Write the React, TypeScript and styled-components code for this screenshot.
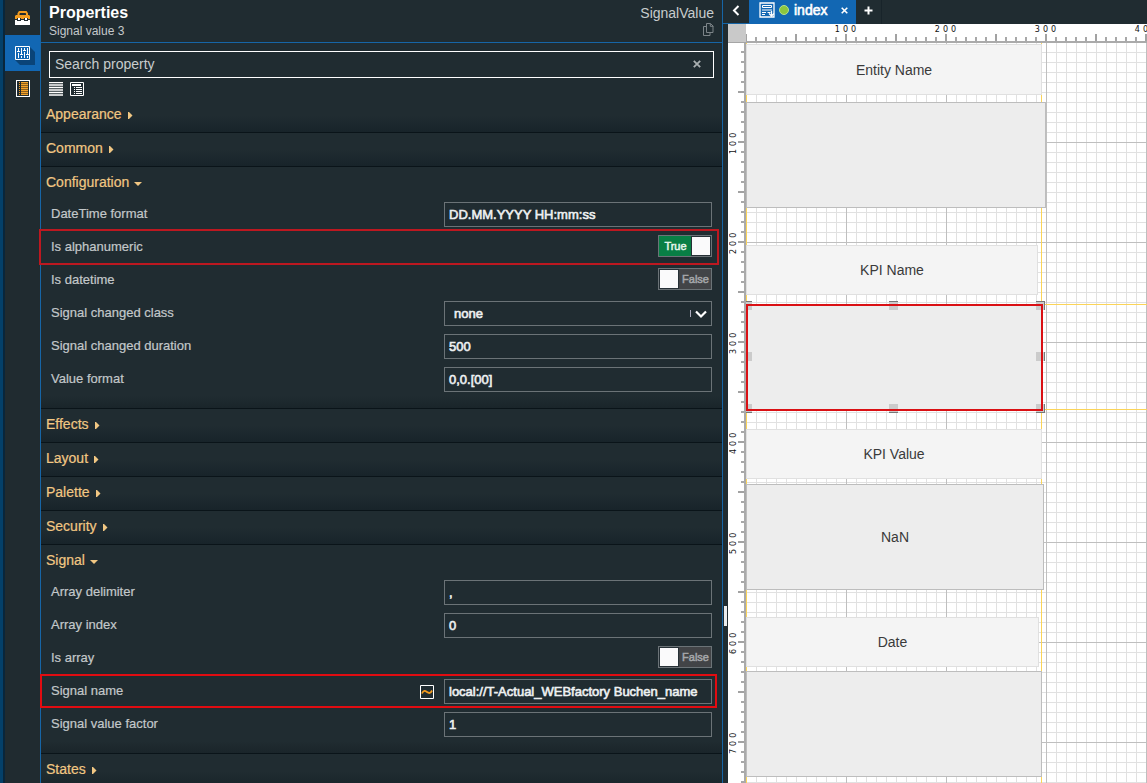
import React from 'react';
import styled, { createGlobalStyle, css } from 'styled-components';

const GlobalStyle = createGlobalStyle`
  *, *::before, *::after { box-sizing: border-box; }
  body { margin: 0; overflow: hidden; background: #202c31; }
`;

const Page = styled.div`
  display: flex;
  width: 1147px;
  height: 783px;
  overflow: hidden;
  background: #202c31;
  font-family: 'Liberation Sans', Arial, sans-serif;
  color: #c8cccd;
`;

const Rail = styled.nav`
  flex: 0 0 41px;
  border-left: 3px solid #044069;
  border-right: 1px solid #1665a6;
  padding-left: 2px;
  background: linear-gradient(to right, #09263b 2px, #202b30 2px);
`;

const RailItem = styled.div<{ $active?: boolean }>`
  height: 36px;
  display: flex;
  align-items: center;
  justify-content: center;
  background: ${p => (p.$active ? '#1267b3' : 'transparent')};
  &:first-child { height: 35px; }
`;

const Panel = styled.section`
  flex: 0 0 682px;
  border-right: 1px solid #1665a6;
  display: flex;
  flex-direction: column;
`;

const PanelHeader = styled.header`
  flex: none;
  height: 43px;
  border-bottom: 1px solid #1665a6;
  padding: 3px 8px 0;
  display: flex;
  justify-content: space-between;
`;

const Title = styled.h1`
  margin: 0;
  font-size: 16px;
  line-height: 19px;
  color: #fff;
`;

const Subtitle = styled.div`
  font-size: 12px;
  line-height: 18px;
  color: #c5c9cb;
`;

const TypeInfo = styled.div`
  font-size: 14px;
  line-height: 20px;
  display: flex;
  flex-direction: column;
  align-items: flex-end;
`;

const Search = styled.div`
  flex: none;
  margin: 8px 8px 0;
  height: 27px;
  border: 1px solid #fff;
  display: flex;
  align-items: center;
  justify-content: space-between;
  padding: 0 12px 2px 5px;
  font-size: 14px;
`;

const ViewModes = styled.div`
  flex: none;
  display: flex;
  gap: 7px;
  height: 21px;
  padding: 4px 8px 0;
`;

const Group = styled.section<{ $open?: boolean }>`
  flex: none;
  border-bottom: 1px solid #0a1419;
  background: ${p =>
    p.$open
      ? 'linear-gradient(to top, #1a252a, #202c31 12px)'
      : 'linear-gradient(to top, #18242a, #202c31 16px)'};
  box-shadow: 0 1px 0 #253237;
  padding-bottom: ${p => (p.$open ? '8px' : '0')};
`;

const GroupTitle = styled.h2<{ $open?: boolean }>`
  margin: 0;
  height: ${p => (p.$open ? '35px' : '33px')};
  padding: 0 5px ${p => (p.$open ? '6px' : '4px')};
  display: flex;
  align-items: center;
  gap: 5px;
  font-size: 14px;
  font-weight: normal;
  color: #f1c783;
  -webkit-text-stroke: 0.2px currentColor;

  svg { margin-top: 3px; }
`;

const Row = styled.div`
  height: 33px;
  padding: 0 10px;
  display: flex;
  align-items: flex-start;
`;

const RowLabel = styled.span`
  flex: 1;
  font-size: 13px;
  line-height: 23px;
  color: #c3c8ca;
  -webkit-text-stroke: 0.2px currentColor;
`;

const Field = styled.div<{ $select?: boolean }>`
  width: 268px;
  height: 25px;
  border: 1px solid #6b7377;
  padding: 0 ${p => (p.$select ? '4px 0 9px' : '5px 0 4px')};
  display: flex;
  align-items: center;
  justify-content: space-between;
  font-size: 13px;
  white-space: nowrap;
  color: #eef1f2;
  -webkit-text-stroke: 0.6px currentColor;
`;

const Toggle = styled.div<{ $on?: boolean }>`
  width: 54px;
  height: 22px;
  border: 1px solid #6b7377;
  display: flex;
  flex-direction: ${p => (p.$on ? 'row-reverse' : 'row')};
  align-items: center;
  background: ${p => (p.$on ? '#087f45' : '#424447')};
  color: ${p => (p.$on ? '#e3f5ea' : '#a5a7aa')};
  font-size: 11px;
  -webkit-text-stroke: 0.5px currentColor;
`;

const Knob = styled.i`
  width: 20px;
  height: 20px;
  flex: none;
  background: #fafafb;
  border: 1px solid #263036;
`;

const ToggleText = styled.span`
  flex: 1;
  text-align: center;
  padding-left: 1px;
`;

const SignalIcon = styled.div`
  margin: 6px 10px 0 0;
  display: flex;
`;

const Anchor = styled.div`
  position: relative;
`;

const Marker = styled.div<{ $soft?: boolean }>`
  position: absolute;
  pointer-events: none;
  border: 2px solid ${p => (p.$soft ? '#bd1820' : '#e10c11')};
  left: ${p => (p.$soft ? '-2px' : '-1px')};
  right: ${p => (p.$soft ? '3px' : '5px')};
  top: ${p => (p.$soft ? '-6px' : '-5px')};
  height: ${p => (p.$soft ? '36px' : '34px')};
`;

const Editor = styled.main`
  flex: 1;
  min-width: 0;
  display: flex;
  flex-direction: column;
`;

const Tabs = styled.div`
  height: 24px;
  flex: none;
  display: flex;
  color: #fff;
`;

const Back = styled.div`
  width: 26px;
  display: flex;
  align-items: center;
  justify-content: center;
  padding-bottom: 3px;
  border-bottom: 1px solid #1665a6;
`;

const Tab = styled.div`
  width: 107px;
  display: flex;
  align-items: center;
  padding: 0 8px 4px 10px;
  background: #1267b3;
  font-size: 14px;
  -webkit-text-stroke: 0.6px currentColor;
`;

const Dot = styled.i`
  width: 10px;
  height: 10px;
  margin: 0 5px 0 4px;
  border-radius: 50%;
  background: #8cc63f;
  border: 1px solid #b6df8d;
`;

const TabName = styled.span`
  flex: 1;
`;

const NewTab = styled.div`
  width: 26px;
  display: flex;
  align-items: center;
  justify-content: center;
  padding-bottom: 4px;
  border-right: 1px solid #18242a;
`;

const Workspace = styled.div`
  flex: 1;
  display: grid;
  grid-template: 19px 1fr / 5px 18px 1fr;
  background: #fff;
  overflow: hidden;
`;

const Splitter = styled.div`
  grid-row: 1 / 3;
  background: #202c31;
  display: flex;
  padding: 582px 0 0 1px;
`;

const Grip = styled.i`
  width: 3px;
  height: 20px;
  background: #e9ebec;
`;

const Corner = styled.div`
  background: #c9c9c9;
  border-bottom: 1px solid #a5a5a5;
`;

const rulerText = css`
  font-family: 'DejaVu Sans', Verdana, sans-serif;
  font-size: 8px;
  letter-spacing: 3px;
  white-space: nowrap;
  color: #111;
`;

const TopRuler = styled.div`
  ${rulerText}
  display: flex;
  padding-left: 50px;
  overflow: hidden;
  background:
    linear-gradient(#aaa, #aaa) 0 17px / 100% 2px no-repeat,
    linear-gradient(to right, #a2a2a2 1px, transparent 1px 49px, #a2a2a2 49px) 0 10px / 50px 9px repeat-x,
    linear-gradient(to right, #a8a8a8 1px, transparent 1px 9px, #a8a8a8 9px) 0 13px / 10px 5px repeat-x;
`;

const TopMark = styled.span`
  flex: 0 0 100px;
  text-align: center;
  padding-left: 2px;
  line-height: 11px;
`;

const SideRuler = styled.div`
  ${rulerText}
  display: flex;
  flex-direction: column;
  padding-top: 50px;
  overflow: hidden;
  background:
    linear-gradient(#aaa, #aaa) 16px 0 / 2px 100% no-repeat,
    linear-gradient(#a2a2a2 1px, transparent 1px 49px, #a2a2a2 49px) 10px -1px / 8px 50px repeat-y,
    linear-gradient(#a8a8a8 1px, transparent 1px 9px, #a8a8a8 9px) 13px -1px / 5px 10px repeat-y;
`;

const SideMark = styled.span`
  flex: 0 0 100px;
  width: 11px;
  writing-mode: vertical-rl;
  transform: rotate(180deg);
  text-align: center;
  line-height: 11px;
  padding-top: 2px;
`;

const Canvas = styled.div`
  position: relative;
  overflow: hidden;
  background:
    linear-gradient(#fbd458, #fbd458) 0 0 / 1px 100% no-repeat,
    linear-gradient(#fbd458, #fbd458) 295px 0 / 1px 100% no-repeat,
    linear-gradient(#fbd458, #fbd458) 0 261px / 100% 1px no-repeat,
    linear-gradient(#fbd458, #fbd458) 0 366px / 100% 1px no-repeat,
    linear-gradient(to right, #bfbfbf 1px, transparent 1px) 0 0 / 100px 100px,
    linear-gradient(#bfbfbf 1px, transparent 1px) 0 -1px / 100px 100px,
    linear-gradient(to right, #e1e1e1 1px, transparent 1px) 0 0 / 10px 10px,
    linear-gradient(#e1e1e1 1px, transparent 1px) 0 -1px / 10px 10px,
    #fff;
`;

const Widget = styled.div<{ $y: number; $w: number; $h: number; $kind: 'label' | 'value' }>`
  position: absolute;
  left: 0;
  top: ${p => p.$y}px;
  width: ${p => p.$w}px;
  height: ${p => p.$h}px;
  display: flex;
  align-items: center;
  justify-content: center;
  font-size: 14px;
  color: #3a3a3a;
  background: ${p => (p.$kind === 'label' ? '#f4f4f4' : '#ededed')};
  border: 1px solid ${p => (p.$kind === 'label' ? '#e0e0e0' : '#bdbdbd')};
`;

const Outline = styled.div`
  position: absolute;
  left: 0;
  top: 261px;
  width: 297px;
  height: 107px;
  border: 2px solid #da1014;
`;

const Handle = styled.i<{ $x: number; $y: number }>`
  position: absolute;
  left: ${p => p.$x}px;
  top: ${p => p.$y}px;
  width: 9px;
  height: 9px;
  background: #cbcbcb;
  border: 0 solid #777;
  border-top-width: ${p => (p.$y === 258 ? 1 : 0)}px;
  border-bottom-width: ${p => (p.$y === 361 ? 1 : 0)}px;
  border-right-width: ${p => (p.$x === 290 ? 1 : 0)}px;
`;

const Caret = ({ open }: { open?: boolean }) => (
  <svg width="9" height="9" viewBox="0 0 9 9" fill="#f1c783">
    {open ? <path d="M0 3h8L4 7z" /> : <path d="M1 1h1l3.500 3.500L2 8H1z" />}
  </svg>
);

const ToolboxIcon = () => (
  <svg width="15" height="14" viewBox="0 0 15 14">
    <path d="M3.500 5V2.500L4.500 1h6.500l1 1.500V5" fill="none" stroke="#f39c1f" strokeWidth="2" />
    <path d="M1 4h13l1 1v3H0V5z" fill="#f39c1f" />
    <path d="M0 9h15v5H0z" fill="#fff" />
    <path d="M2 7h4v3H2zM9 7h4v3H9z" fill="#202b30" />
    <path d="M3 7h2v2H3zM10 7h2v2h-2z" fill="#fff" />
  </svg>
);

const SlidersIcon = () => (
  <svg width="25" height="24" viewBox="0 0 25 24">
    <path d="M20 6l5 5v13H10l-5-5z" fill="#0a4478" />
    <path d="M5.500 5.500h14v13h-14z" fill="#1267b3" stroke="#fff" />
    <path
      d="M8.500 7v3m0 2v5M11.500 7v6m0 2v2M14.500 7v2m0 2v6M17.500 7v6m0 2v2M7 10.500h3M10 13.500h3M13 9.500h3M16 13.500h3"
      stroke="#fff"
      fill="none"
    />
  </svg>
);

const NotebookIcon = () => (
  <svg width="15" height="18" viewBox="0 0 15 18" shapeRendering="crispEdges">
    <path d="M1 1h13v16H1z" fill="#202b30" />
    <path d="M1.500 .5h13v16h-13z" fill="none" stroke="#fff" />
    <path d="M6 2h7v13H6z" fill="#8a5f20" />
    <path d="M4 2v13" stroke="#f39c1f" strokeDasharray="1 1" />
    <path d="M6 2.500h7M6 4.500h7M6 6.500h7M6 8.500h7M6 10.500h7M6 12.500h7M6 14.500h7" stroke="#f5a32a" />
  </svg>
);

const ListIcon = () => (
  <svg width="14" height="14" viewBox="0 0 14 14">
    <path d="M0 .5h14M0 3h14M0 5.500h14M0 8h14M0 10.500h14M0 13h14" stroke="#fff" strokeWidth="1.300" />
  </svg>
);

const TreeIcon = () => (
  <svg width="14" height="14" viewBox="0 0 14 14">
    <path d="M.5 .5h13v13H.5z" fill="none" stroke="#fff" />
    <path d="M2 2h9v2H2zM6 5h6v1H6zM6 7h6v1H6zM6 9h6v1H6zM6 11h6v1H6z" fill="#fff" />
    <path d="M4 5h1v1H4zM4 7h1v1H4zM4 9h1v1H4zM4 11h1v1H4z" fill="#fff" />
  </svg>
);

const CopyIcon = () => (
  <svg width="12" height="13" viewBox="0 0 12 13" fill="none" stroke="#7c8488">
    <path d="M4.500 .5h4l2.500 2.500v6.500H4.500z" />
    <path d="M8.300 .8v2.500h3M4 3.500H1.500v9h6.500v-2.500" />
  </svg>
);

const CrossIcon = ({ size, color }: { size: number; color: string }) => (
  <svg width={size} height={size} viewBox="0 0 8 8" stroke={color} strokeWidth="1.800">
    <path d="M.8 .8l6.400 6.400M7.200 .8L.8 7.200" />
  </svg>
);

const PageIcon = () => (
  <svg width="16" height="16" viewBox="0 0 16 16" fill="none" stroke="#fff">
    <path d="M1 1h14v14H1z" strokeWidth="1.300" />
    <path d="M3.500 3.500h9v2h-9z" />
    <path d="M3 8h10M3 10.500h4M3 12.500h3" />
    <path d="M8.500 10.500h3" />
    <path d="M12.500 9v4.500M10 11.500l2.500 2.500 2.500-2.500" strokeWidth="1.300" />
  </svg>
);

type Prop = { label: string; value?: string; toggle?: boolean; select?: boolean; marked?: 'soft' | 'strong'; signal?: boolean };
type Section = { title: string; rows?: Prop[] };

const sections: Section[] = [
  { title: 'Appearance' },
  { title: 'Common' },
  {
    title: 'Configuration',
    rows: [
      { label: 'DateTime format', value: 'DD.MM.YYYY HH:mm:ss' },
      { label: 'Is alphanumeric', toggle: true, marked: 'soft' },
      { label: 'Is datetime', toggle: false },
      { label: 'Signal changed class', value: 'none', select: true },
      { label: 'Signal changed duration', value: '500' },
      { label: 'Value format', value: '0,0.[00]' },
    ],
  },
  { title: 'Effects' },
  { title: 'Layout' },
  { title: 'Palette' },
  { title: 'Security' },
  {
    title: 'Signal',
    rows: [
      { label: 'Array delimiter', value: ',' },
      { label: 'Array index', value: '0' },
      { label: 'Is array', toggle: false },
      { label: 'Signal name', value: 'local://T-Actual_WEBfactory Buchen_name', marked: 'strong', signal: true },
      { label: 'Signal value factor', value: '1' },
    ],
  },
  { title: 'States' },
];

const PropertyRow = ({ prop }: { prop: Prop }) => (
  <Anchor>
    <Row>
      <RowLabel>{prop.label}</RowLabel>
      {prop.signal && (
        <SignalIcon>
          <svg width="14" height="14" viewBox="0 0 14 14" fill="none">
            <path d="M.5 .5h13v13H.5z" stroke="#fff" />
            <path d="M2 8.500c1.500-3.500 3-3 5-1.500s3.500 1.500 5-1.500" stroke="#f39c1f" strokeWidth="1.800" />
          </svg>
        </SignalIcon>
      )}
      {prop.toggle === undefined ? (
        <Field $select={prop.select}>
          {prop.value}
          {prop.select && (
            <svg width="18" height="10" viewBox="0 0 18 10" fill="none" stroke="#fff">
              <path d="M1.500 1v7" stroke="#aab" />
              <path d="M7 2.500l5 5 5-5" strokeWidth="2.200" />
            </svg>
          )}
        </Field>
      ) : (
        <Toggle $on={prop.toggle}>
          <Knob />
          <ToggleText>{prop.toggle ? 'True' : 'False'}</ToggleText>
        </Toggle>
      )}
    </Row>
    {prop.marked && <Marker $soft={prop.marked === 'soft'} />}
  </Anchor>
);

const handles = [
  [-3, 258], [143, 258], [290, 258],
  [-3, 309], [290, 309],
  [-3, 361], [143, 361], [290, 361],
];

export default function App() {
  return (
    <Page>
      <GlobalStyle />
      <Rail>
        <RailItem><ToolboxIcon /></RailItem>
        <RailItem $active><SlidersIcon /></RailItem>
        <RailItem><NotebookIcon /></RailItem>
      </Rail>
      <Panel>
        <PanelHeader>
          <div>
            <Title>Properties</Title>
            <Subtitle>Signal value 3</Subtitle>
          </div>
          <TypeInfo>
            SignalValue
            <CopyIcon />
          </TypeInfo>
        </PanelHeader>
        <Search>
          Search property
          <CrossIcon size={8} color="#a9afb1" />
        </Search>
        <ViewModes>
          <ListIcon />
          <TreeIcon />
        </ViewModes>
        {sections.map(s => (
          <Group key={s.title} $open={!!s.rows}>
            <GroupTitle $open={!!s.rows}>
              {s.title}
              <Caret open={!!s.rows} />
            </GroupTitle>
            {s.rows?.map(r => <PropertyRow key={r.label} prop={r} />)}
          </Group>
        ))}
      </Panel>
      <Editor>
        <Tabs>
          <Back>
            <svg width="8" height="11" viewBox="0 0 8 11" fill="none" stroke="#fff" strokeWidth="2">
              <path d="M6.500 1L2 5.500 6.500 10" />
            </svg>
          </Back>
          <Tab>
            <PageIcon />
            <Dot />
            <TabName>index</TabName>
            <CrossIcon size={7} color="#fff" />
          </Tab>
          <NewTab>
            <svg width="9" height="9" viewBox="0 0 9 9" stroke="#fff" strokeWidth="2">
              <path d="M4.500 .5v8M.5 4.500h8" />
            </svg>
          </NewTab>
        </Tabs>
        <Workspace>
          <Splitter><Grip /></Splitter>
          <Corner />
          <TopRuler>
            {[100, 200, 300, 400].map(n => <TopMark key={n}>{n}</TopMark>)}
          </TopRuler>
          <SideRuler>
            {[100, 200, 300, 400, 500, 600, 700].map(n => <SideMark key={n}>{n}</SideMark>)}
          </SideRuler>
          <Canvas>
            <Widget $y={1} $w={296} $h={51} $kind="label">Entity Name</Widget>
            <Widget $y={59} $w={300} $h={106} $kind="value" />
            <Widget $y={202} $w={292} $h={50} $kind="label">KPI Name</Widget>
            <Widget $y={261} $w={297} $h={107} $kind="value" />
            {handles.map(([x, y]) => <Handle key={`${x}-${y}`} $x={x} $y={y} />)}
            <Outline />
            <Widget $y={386} $w={296} $h={50} $kind="label">KPI Value</Widget>
            <Widget $y={441} $w={298} $h={106} $kind="value">NaN</Widget>
            <Widget $y={574} $w={293} $h={50} $kind="label">Date</Widget>
            <Widget $y={628} $w={296} $h={106} $kind="value" />
          </Canvas>
        </Workspace>
      </Editor>
    </Page>
  );
}
